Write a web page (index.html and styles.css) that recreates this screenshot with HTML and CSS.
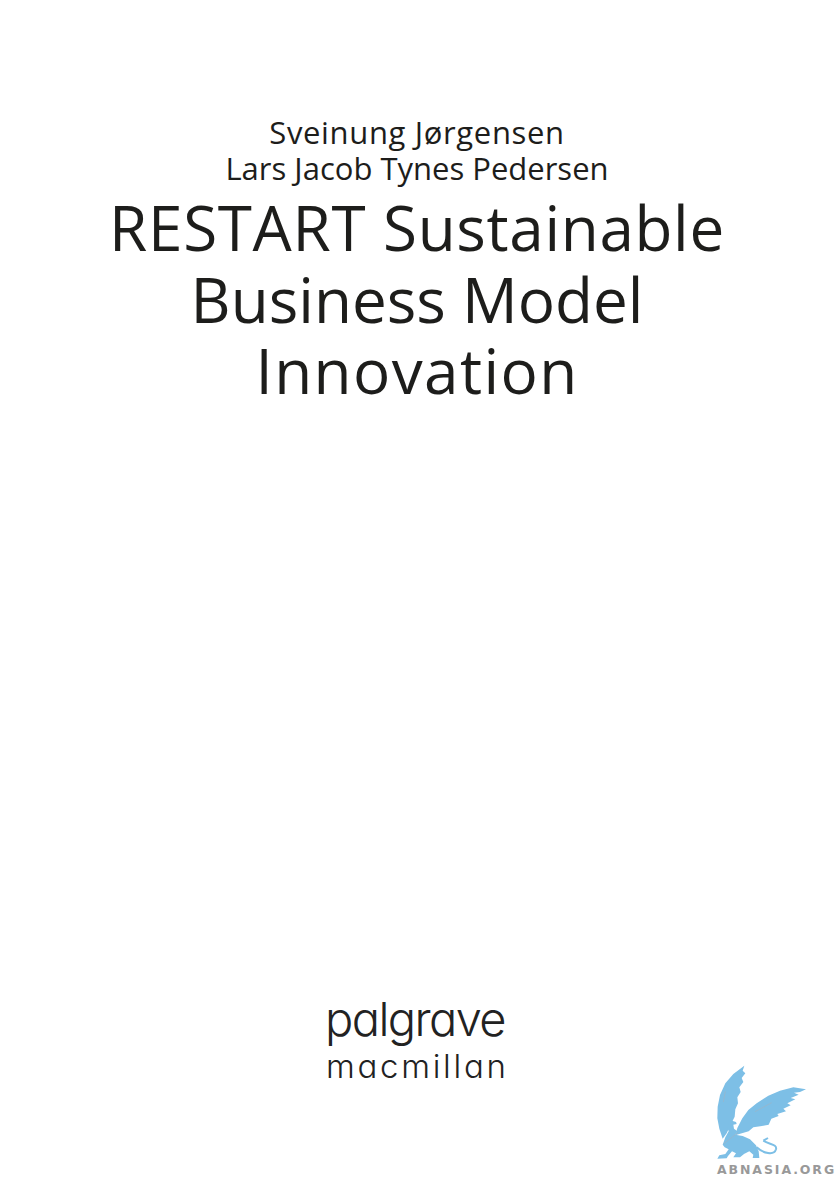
FILE: index.html
```html
<!DOCTYPE html>
<html lang="en">
<head>
<meta charset="utf-8">
<title>RESTART Sustainable Business Model Innovation</title>
<link rel="stylesheet" href="styles.css">
</head>
<body>
<main class="page">
  <header class="head">
    <div class="authors">
      <p class="author author-first">Sveinung Jørgensen</p>
      <p class="author">Lars Jacob Tynes Pedersen</p>
    </div>
    <h1 class="title">
      <span class="line line-1">RESTART Sustainable</span>
      <span class="line line-2">Business Model</span>
      <span class="line line-3">Innovation</span>
    </h1>
  </header>
  <div class="publisher">
    <div class="pub-top">palgrave</div>
    <div class="pub-bottom">macmillan</div>
  </div>
  <aside class="mark">
    <svg class="griffin" viewBox="0 0 420 336" width="140" height="112" aria-hidden="true">
      <path class="blue" d="M133 47 L128 62 L136 70 L125 84 L130 96 L118 112 L122 126 L112 142 L114 160 L106 178 L104 200 L92 224 L80 250 L68 266 L58 236 L52 205 L53 170 L60 135 L76 100 L100 72 Z"/>
      <path class="blue" d="M318 118 L300 126 L282 128 L296 134 L272 144 L286 148 L262 160 L272 166 L250 176 L258 184 L232 192 L236 198 L214 206 L206 224 L186 228 L160 232 L146 244 L118 252 L106 256 L112 234 L127 205 L145 180 L170 160 L205 137 L240 122 L280 112 Z"/>
      <path class="blue" d="M80 228 L96 212 L108 216 L110 222 L100 224 L102 236 L112 244 L106 254 L128 258 L150 268 L168 286 L176 304 L178 324 L158 324 L160 314 L148 304 L132 312 L120 322 L100 322 L108 310 L96 304 L84 318 L80 325 L52 326 L58 316 L76 312 L86 298 L74 292 L68 284 L76 262 L86 244 Z"/>
      <path class="tail" d="M170 292 C190 310 222 318 228 298 C232 282 208 284 190 272 M190 272 L204 264"/>
      <path class="feather" d="M76 124 L70 156 M165 185 L215 158 M70 282 L114 248"/>
    </svg>
    <div class="mark-text">ABNASIA.ORG</div>
  </aside>
</main>
</body>
</html>
```
FILE: styles.css
```css
html, body {
  margin: 0;
  padding: 0;
  background: #fff;
}
.page {
  position: relative;
  box-sizing: border-box;
  width: 840px;
  height: 1191px;
  overflow: hidden;
  padding-top: 114px;
  display: flex;
  flex-direction: column;
  align-items: center;
  font-family: "Open Sans", "Noto Sans", sans-serif;
  color: #1d1d1b;
}
.head {
  text-align: center;
  width: 100%;
  padding-right: 6px;
  box-sizing: border-box;
}
.author {
  margin: 0;
  font-size: 31px;
  line-height: 36px;
  font-weight: 400;
}
.author-first {
  letter-spacing: 0.65px;
}
.title {
  margin: 6px 0 0;
  font-size: 62px;
  line-height: 71.5px;
  font-weight: 400;
}
.line {
  display: block;
}
.line-1 {
  letter-spacing: 0.66px;
}
.line-3 {
  letter-spacing: 1.4px;
}
.publisher {
  margin-top: auto;
  margin-bottom: 107px;
  width: 178px;
  margin-right: 12px;
  font-family: "Inter", sans-serif;
  font-feature-settings: "cv11" 1;
  font-weight: 300;
  color: #222;
  white-space: nowrap;
}
.pub-top {
  font-size: 47px;
  line-height: 50px;
  letter-spacing: -1.6px;
}
.pub-bottom {
  margin-top: 4px;
  padding-left: 1px;
  font-size: 33px;
  line-height: 36px;
  letter-spacing: 2.7px;
}
.mark {
  position: absolute;
  left: 700px;
  top: 1050px;
  width: 140px;
}
.griffin {
  display: block;
}
.blue {
  fill: #7dbfe6;
}
.tail {
  fill: none;
  stroke: #7dbfe6;
  stroke-width: 6;
}
.feather {
  fill: none;
  stroke: #9fb4c4;
  stroke-width: 2;
}
.mark-text {
  margin: 0 0 0 17px;
  font-family: "DejaVu Sans", sans-serif;
  font-weight: 700;
  font-size: 12.5px;
  line-height: 16px;
  letter-spacing: 1.9px;
  color: #999;
  white-space: nowrap;
}
```
